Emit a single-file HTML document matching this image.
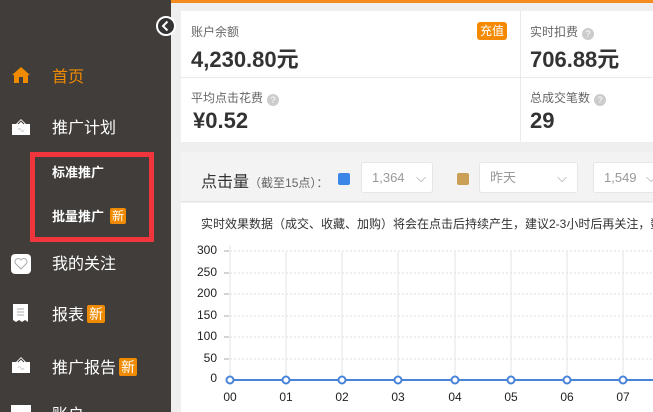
<!DOCTYPE html>
<html><head><meta charset="utf-8"><style>
*{margin:0;padding:0;box-sizing:border-box}
html,body{width:653px;height:412px;overflow:hidden}
body{position:relative;background:#efefef;font-family:"Liberation Sans","Noto Sans CJK SC",sans-serif}
.a{position:absolute}
#sb{left:0;top:0;width:171px;height:412px;background:#403d3a}
.mi{position:absolute;left:52px;color:#fff;font-size:16px;line-height:20px}
.sub{position:absolute;left:52px;color:#fff;font-size:13px;font-weight:bold;line-height:16px}
.new{display:inline-block;background:#f08a00;color:#fff;font-size:12px;line-height:16px;padding:0 2px;border-radius:2px;vertical-align:1px;margin-left:6px;font-weight:normal}
.lbl{font-size:12px;color:#666}
.big{font-size:22px;font-weight:bold;color:#333}
.q{display:inline-block;width:12px;height:12px;border-radius:50%;background:#ccc;color:#fff;font-size:9px;line-height:12px;text-align:center;vertical-align:-1px;margin-left:4px}
.sel{position:absolute;top:162px;height:31px;background:#fff;border:1px solid #e6e6e6;border-radius:3px;color:#999;font-size:13px;line-height:29px;padding-left:10px}
.yl{position:absolute;width:30px;text-align:right;font-size:12px;color:#222;left:187px}
.xl{position:absolute;font-size:12px;color:#222;top:390px;width:20px;text-align:center}
</style></head><body>
<div class="a" style="left:0;top:0;width:653px;height:3px;background:#f58a1f"></div>
<div id="sb" class="a"></div>
<svg class="a" style="left:156px;top:16px" width="20" height="20"><circle cx="10" cy="10" r="9" fill="#333" stroke="#fff" stroke-width="2"/><path d="M11.5 5.5 L7 10 L11.5 14.5" fill="none" stroke="#fff" stroke-width="2"/></svg>
<svg class="a" style="left:11px;top:66px" width="20" height="18"><path d="M10 1 L19 9 L17 9 L17 17 L3 17 L3 9 L1 9Z" fill="#f08a00"/><rect x="8" y="11" width="4" height="6" fill="#403d3a"/></svg>
<svg class="a" style="left:11px;top:118px" width="20" height="18"><path d="M10 1 L15 6 L19 6 L19 17 L1 17 L1 6 L5 6Z" fill="#fff"/><path d="M7 6 L10 3 L13 6" fill="none" stroke="#403d3a"/><path d="M7 12 Q8.5 9 10 12 Q11.5 15 13 12" fill="none" stroke="#ccc"/></svg>
<svg class="a" style="left:11px;top:254px" width="20" height="20"><rect x="0" y="0" width="20" height="20" rx="4" fill="#fff"/><path d="M10 15 L4.5 9.5 A3 3 0 0 1 10 6 A3 3 0 0 1 15.5 9.5Z" fill="none" stroke="#aaa"/></svg>
<svg class="a" style="left:12px;top:303px" width="17" height="20"><path d="M1 1 H16 V19 L13 17 L10 19 L7 17 L4 19 L1 17Z" fill="#fff"/><path d="M5 6h7M5 9h7M5 12h7" stroke="#aaa"/></svg>
<svg class="a" style="left:11px;top:356px" width="20" height="18"><path d="M10 1 L15 6 L19 6 L19 17 L1 17 L1 6 L5 6Z" fill="#fff"/><path d="M7 6 L10 3 L13 6" fill="none" stroke="#403d3a"/><path d="M7 12 Q8.5 9 10 12 Q11.5 15 13 12" fill="none" stroke="#ccc"/></svg>
<div class="a" style="left:11px;top:405px;width:20px;height:7px;background:#fff"></div>
<div class="mi" style="top:68px;color:#f08a00">首页</div>
<div class="mi" style="top:119px">推广计划</div>
<div class="a" style="left:30px;top:152px;width:124px;height:90px;border:5px solid #f0353d"></div>
<div class="sub" style="top:165px">标准推广</div>
<div class="sub" style="top:208px">批量推广<span class="new">新</span></div>
<div class="mi" style="top:255px">我的关注</div>
<div class="mi" style="top:305px">报表<span class="new" style="margin-left:3px;font-size:14px;line-height:18px">新</span></div>
<div class="mi" style="top:358px">推广报告<span class="new" style="margin-left:3px;font-size:14px;line-height:18px">新</span></div>
<div class="mi" style="top:406px">账户</div>
<div class="a" style="left:181px;top:11px;width:472px;height:131px;background:#fff"></div>
<div class="a" style="left:181px;top:77px;width:472px;height:1px;background:#eaeaea"></div>
<div class="a" style="left:520px;top:11px;width:1px;height:131px;background:#eaeaea"></div>
<div class="a lbl" style="left:191px;top:23px">账户余额</div>
<div class="a" style="left:477px;top:22px;background:#f58a00;color:#fff;font-size:12px;line-height:18px;padding:0 3px;border-radius:3px">充值</div>
<div class="a big" style="left:191px;top:42px">4,230.80元</div>
<div class="a lbl" style="left:191px;top:89px">平均点击花费<span class="q">?</span></div>
<div class="a big" style="left:193px;top:108px">¥0.52</div>
<div class="a lbl" style="left:530px;top:23px">实时扣费<span class="q">?</span></div>
<div class="a big" style="left:530px;top:42px">706.88元</div>
<div class="a lbl" style="left:530px;top:89px">总成交笔数<span class="q">?</span></div>
<div class="a big" style="left:530px;top:108px">29</div>
<div class="a" style="left:181px;top:152px;width:472px;height:50px;background:#f3f3f3;border-bottom:1px solid #e6e6e6"></div>
<div class="a" style="left:201px;top:168px;font-size:16px;color:#333">点击量<span style="font-size:12px;color:#666">（截至15点）：</span></div>
<div class="a" style="left:338px;top:173px;width:12px;height:12px;background:#3b86e6;border-radius:2px"></div>
<div class="sel" style="left:361px;width:72px">1,364 <span style="margin-left:8px">⌵</span></div>
<div class="a" style="left:457px;top:173px;width:12px;height:12px;background:#c9a055;border-radius:2px"></div>
<div class="sel" style="left:479px;width:99px">昨天<span style="position:absolute;right:10px">⌵</span></div>
<div class="sel" style="left:593px;width:70px">1,549 <span style="margin-left:6px">⌵</span></div>
<div class="a" style="left:181px;top:203px;width:472px;height:209px;background:#fff"></div>
<div class="a" style="left:201px;top:215px;font-size:12px;color:#333;white-space:nowrap">实时效果数据（成交、收藏、加购）将会在点击后持续产生，建议2-3小时后再关注，数</div>
<svg class="a" style="left:0;top:0" width="653" height="412">
<g stroke="#ddd" stroke-dasharray="2,2">
<line x1="226" y1="251" x2="653" y2="251"/><line x1="226" y1="273" x2="653" y2="273"/><line x1="226" y1="294" x2="653" y2="294"/><line x1="226" y1="316" x2="653" y2="316"/><line x1="226" y1="337" x2="653" y2="337"/><line x1="226" y1="359" x2="653" y2="359"/></g>
<g stroke="#aaa"><line x1="224" y1="251" x2="229" y2="251"/><line x1="224" y1="273" x2="229" y2="273"/><line x1="224" y1="294" x2="229" y2="294"/><line x1="224" y1="316" x2="229" y2="316"/><line x1="224" y1="337" x2="229" y2="337"/><line x1="224" y1="359" x2="229" y2="359"/></g>
<g stroke="#e3e3e3"><line x1="230" y1="245" x2="230" y2="380"/><line x1="286" y1="252" x2="286" y2="380"/><line x1="342" y1="252" x2="342" y2="380"/><line x1="398" y1="252" x2="398" y2="380"/><line x1="455" y1="252" x2="455" y2="380"/><line x1="511" y1="252" x2="511" y2="380"/><line x1="567" y1="252" x2="567" y2="380"/><line x1="623" y1="252" x2="623" y2="380"/></g>
<line x1="230" y1="380" x2="653" y2="380" stroke="#4a84d8" stroke-width="2"/>
<g fill="#fff" stroke="#4a84d8" stroke-width="2"><circle cx="230" cy="380" r="3.5"/><circle cx="286" cy="380" r="3.5"/><circle cx="342" cy="380" r="3.5"/><circle cx="398" cy="380" r="3.5"/><circle cx="455" cy="380" r="3.5"/><circle cx="511" cy="380" r="3.5"/><circle cx="567" cy="380" r="3.5"/><circle cx="623" cy="380" r="3.5"/></g>
</svg>
<div class="yl" style="top:243px">300</div><div class="yl" style="top:265px">250</div><div class="yl" style="top:286px">200</div><div class="yl" style="top:308px">150</div><div class="yl" style="top:329px">100</div><div class="yl" style="top:351px">50</div><div class="yl" style="top:371px">0</div>
<div class="xl" style="left:220px">00</div><div class="xl" style="left:276px">01</div><div class="xl" style="left:332px">02</div><div class="xl" style="left:388px">03</div><div class="xl" style="left:445px">04</div><div class="xl" style="left:501px">05</div><div class="xl" style="left:557px">06</div><div class="xl" style="left:613px">07</div>
</body></html>
